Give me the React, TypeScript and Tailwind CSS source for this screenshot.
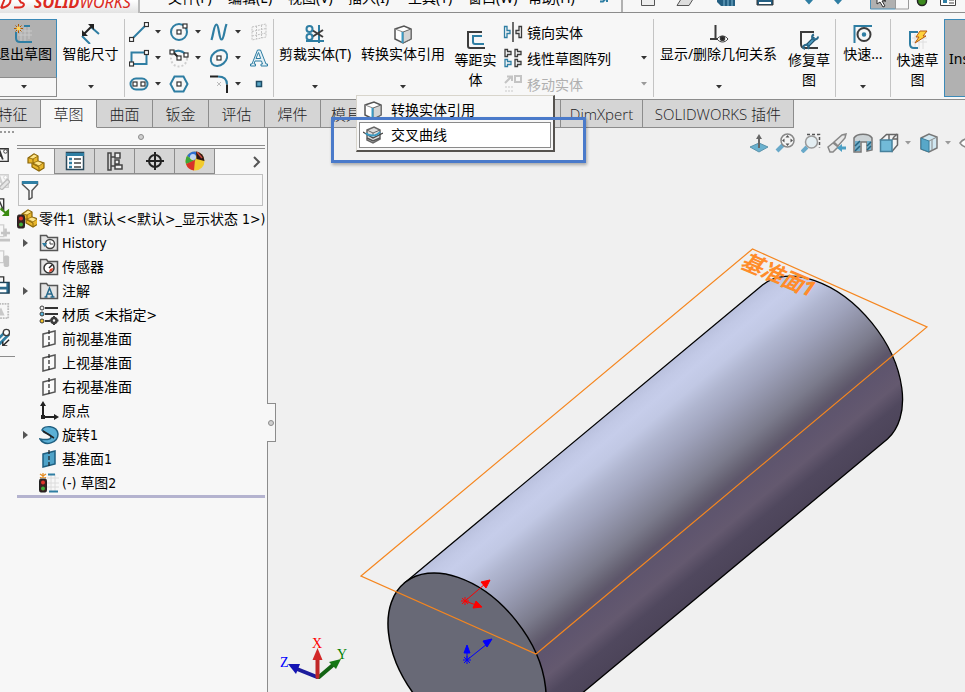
import { ReactNode } from 'react';
import clsx from 'clsx';

const BLUE = '#2f7ea3';
const DARK = '#3c3c3c';

interface IconProps {
  children: ReactNode;
  className?: string;
}

function Icon({ children, className = 'w-5 h-5' }: IconProps) {
  return (
    <svg viewBox="0 0 20 20" fill="none" stroke={DARK} strokeWidth="1.5" className={clsx('shrink-0', className)} aria-hidden="true">
      {children}
    </svg>
  );
}

function Arrow({ dim = false }: { dim?: boolean }) {
  return (
    <svg viewBox="0 0 6 4" className={clsx('w-1.5 h-1 shrink-0', dim ? 'fill-[#9a9a9a]' : 'fill-[#333]')} aria-hidden="true">
      <path d="M0 0h6L3 3.5z" />
    </svg>
  );
}

function Handle({ x, y }: { x: number; y: number }) {
  return <rect x={x - 2} y={y - 2} width="4" height="4" fill="#fff" stroke="#333" strokeWidth="1.2" />;
}

/* ---------- menu bar ---------- */

const menus = ['文件(F)', '编辑(E)', '视图(V)', '插入(I)', '工具(T)', '窗口(W)', '帮助(H)'];

function MenuBar() {
  return (
    <header className="relative z-10 h-[13px] shrink-0 border-b border-[#8c8c8c] bg-[#f7f7f7]">
      <div className="flex h-3 items-end overflow-hidden pl-[168px]">
        <nav className="flex w-[432px] shrink-0 items-end pb-1">
          {menus.map((m) => (
            <button key={m} className="w-[60px] shrink-0 text-left text-[14px] leading-5 text-black">
              {m}
            </button>
          ))}
        </nav>
        <svg viewBox="0 0 365 12" className="h-3 w-[365px] shrink-0" fill="none" aria-hidden="true">
          <path d="M0 1.500h3l2-2M7-1v3" stroke={BLUE} strokeWidth="2" />
          <path d="M22 0v12" stroke="#9a9a9a" strokeWidth="1.500" />
          <path d="M41.500-3v8.500h13V-3z" fill="#eee" stroke="#555" />
          <path d="M83-4l-6 9.500h12l6-9.500z" fill="#ddd" stroke="#555" />
          <path d="M117-2h18v8h-14l-4-4z" fill="#245f82" />
          <path d="M124 0v6M128 0v6M132 0v6" stroke="#7fb9d4" />
          <path d="M157-2h16v7h-16z" fill="#245f82" stroke="#333" />
          <path d="M159 3h12" stroke="#fff" strokeWidth="2" />
          <path d="M205 0h8l-4 4.500zM234 0h8l-4 4.500z" fill={BLUE} />
          <path d="M270.500-2h25v11h-25z" fill="#b0b0b0" stroke="#4a90b8" />
          <path d="M295.500-2h13v11h-13z" fill="#f7f7f7" stroke="#999" />
          <path d="M277-2v6l3-2 3 5 2-1-3-5h4z" fill="#fff" stroke="#333" />
          <circle cx="322" cy="1" r="4.500" fill="#3c8a1e" stroke="#222" strokeWidth="1.500" />
          <path d="M340.500-3h15v8.500h-15z" fill="#fff" stroke="#444" />
          <path d="M343-1h4v4h-4z" fill={BLUE} />
          <path d="M349 0h5M349 3h5" stroke="#444" />
        </svg>
      </div>
      <div className="absolute left-0 top-0 h-[17px] w-[140px] overflow-hidden border-b-2 border-r-2 border-[#b9b9b9] bg-linear-to-b from-white to-[#dedede]">
        <div className="flex h-2.5 items-end text-[#dc2a22]">
          <svg viewBox="0 0 34 10" className="h-2.5 w-[34px] shrink-0" fill="none" stroke="currentColor" strokeWidth="2" aria-hidden="true">
            <path d="M1 8C8 7 12 3 10-3M5-2L1 8M14 7.500h5c5 0 7-4 2-5l-2-3" />
          </svg>
          <span className="text-[16px] italic leading-4">
            <b>SOLID</b>WORKS
          </span>
        </div>
      </div>
    </header>
  );
}

/* ---------- ribbon ---------- */

interface RibbonButtonProps {
  icon: ReactNode;
  label: string;
  arrow?: boolean;
  low?: boolean;
  className?: string;
}

function RibbonButton({ icon, label, arrow = false, low = false, className }: RibbonButtonProps) {
  return (
    <button
      className={clsx(
        'flex h-[86px] shrink-0 flex-col items-center text-[14px] leading-5 text-black',
        low ? 'pt-[17px]' : 'pt-[11px]',
        className,
      )}
    >
      {icon}
      <span className={low ? 'w-11 text-center' : 'whitespace-nowrap'}>{label}</span>
      {arrow && (
        <span className="mt-auto pb-2.5">
          <Arrow />
        </span>
      )}
    </button>
  );
}

function Separator() {
  return <div className="mt-1.5 h-[78px] w-px shrink-0 bg-[#c4c4c4]" />;
}

const sketchTools: { name: string; icon: ReactNode; arrow: boolean }[] = [
  { name: '直线', arrow: true, icon: <><path d="M3 17L17 3" stroke={BLUE} strokeWidth="2" /><Handle x={2.500} y={17.500} /><Handle x={17.500} y={2.500} /></> },
  { name: '圆', arrow: true, icon: <><circle cx="10" cy="10" r="8" stroke={BLUE} strokeWidth="2" /><Handle x={10} y={10} /><Handle x={16} y={4} /></> },
  { name: '样条曲线', arrow: true, icon: <path d="M2.500 18C5 10 5 2.500 7.500 2.500S10 17.500 12.500 17.500 15 9 17.500 2" stroke={BLUE} strokeWidth="2.200" /> },
  { name: '基准面', arrow: false, icon: <path d="M3 5l14-3v13L3 18zM7.500 4v13M12.500 3v13M3 9.500l14-3M3 14l14-3" stroke="#c2c2c2" strokeWidth="1" strokeDasharray="2 1" /> },
  { name: '边角矩形', arrow: true, icon: <><path d="M2.500 4.500h15v11.500h-15z" stroke={BLUE} strokeWidth="2" /><Handle x={2.500} y={16} /><Handle x={17.500} y={4.500} /></> },
  { name: '圆弧', arrow: true, icon: <><circle cx="10" cy="10.500" r="8" stroke="#cfcfcf" strokeWidth="2" strokeDasharray="2 2" /><path d="M4 4.500c4-3 10-2 13 2.500" stroke={BLUE} strokeWidth="2" /><path d="M4 4l6 6" stroke="#222" strokeWidth="2" /><Handle x={3} y={4} /><Handle x={10} y={10} /><Handle x={17} y={7} /></> },
  { name: '椭圆', arrow: true, icon: <><ellipse cx="10" cy="10" rx="9" ry="7" transform="rotate(-40 10 10)" stroke={BLUE} strokeWidth="2" /><Handle x={10} y={10} /></> },
  { name: '文字', arrow: false, icon: <path d="M1.500 18h5v-2H5l1-3h6.500l1 3H12v2h6.500v-2H17L11.500 2h-3L3 16H1.500zM7 10.500L9.500 4.500l2.200 6z" fill="#e4f1f7" stroke={BLUE} strokeWidth="1" /> },
  { name: '槽口', arrow: true, icon: <><rect x="1.500" y="4.500" width="17" height="11" rx="5.500" stroke={BLUE} strokeWidth="2" /><Handle x={6} y={10} /><Handle x={14} y={10} /></> },
  { name: '多边形', arrow: false, icon: <><path d="M5.500 2.500h9l4 7.500-4 7.500h-9l-4-7.500z" stroke={BLUE} strokeWidth="2" /><Handle x={10} y={10} /></> },
  { name: '圆角', arrow: true, icon: <><path d="M1 2.500h8" stroke="#222" strokeWidth="2" /><path d="M9 2.500c6 0 9 3 9 8" stroke={BLUE} strokeWidth="2" /><path d="M18 10.500V19" stroke="#222" strokeWidth="2" /><path d="M8 8l4 4M12 8l-4 4" stroke="#bbb" strokeWidth="1" /></> },
  { name: '点', arrow: false, icon: <rect x="7.500" y="7.500" width="5" height="5" fill="#5aa7c7" stroke="#1f4d66" /> },
];

function CubeDrawing() {
  return (
    <>
      <path d="M2 5l9-3 7 3v10l-8 4-8-4z" fill="#fff" stroke="#555" />
      <path d="M10 8l8-3v10l-8 4z" fill="#d4d4d4" stroke="#666" strokeWidth="1" />
      <path d="M2 5l8 3" stroke="#888" strokeWidth="1" />
      <path d="M9.500 8v11" stroke="#3a9bc4" strokeWidth="2" />
    </>
  );
}

const patternTools = [
  {
    label: '镜向实体',
    arrow: false,
    dim: false,
    icon: (
      <>
        <path d="M10 0v20" stroke="#222" strokeWidth="1.300" />
        <path d="M1.500 4.500v11h2.500v-4h3v-3H4v-4z" stroke={BLUE} strokeWidth="1.300" />
        <path d="M18.500 4.500v11H16v-4h-3v-3h3v-4z" strokeWidth="1.300" />
      </>
    ),
  },
  {
    label: '线性草图阵列',
    arrow: true,
    dim: false,
    icon: (
      <>
        <path d="M2 1.500v7h2.500V6.500H8v-3H4.500v-2zM12 1.500v7h2.500V6.500H18v-3h-3.500v-2zM12 11.500v7h2.500v-2H18v-3h-3.500v-2z" strokeWidth="1.300" />
        <path d="M2 11.500v7h2.500v-2H8v-3H4.500v-2z" stroke={BLUE} strokeWidth="1.300" />
      </>
    ),
  },
  {
    label: '移动实体',
    arrow: true,
    dim: true,
    icon: (
      <g stroke="#c4c4c4">
        <path d="M2 9l6-6M4 2.500h5V7" strokeWidth="2" />
        <path d="M12 2h6v6h-6z" strokeWidth="2" />
        <path d="M2 13h8M2 17h8" strokeDasharray="2 1" strokeWidth="2" stroke="#e0e0e0" />
      </g>
    ),
  },
];

function ConvertMenu() {
  return (
    <div className="absolute left-0 top-[82px] z-20 w-[199px] border border-r-2 border-b-2 border-[#d8d5cc] border-b-[#55524e] border-r-[#55524e] bg-[#f7f7f7] p-0.5 text-[14px] leading-6 text-black">
      <button className="flex h-6 w-full items-center gap-2 pl-1">
        <Icon><CubeDrawing /></Icon>
        转换实体引用
      </button>
      <button className="flex h-[26px] w-full items-center gap-2 border border-[#8a8a8a] bg-white pl-[3px]">
        <Icon className="h-5 w-5">
          <path d="M4 5l7-3 6 3v9l-7 4-6-3z" fill="#ddd" stroke="#666" />
          <path d="M4 5l6 3 7-3M10 8v3" stroke="#666" strokeWidth="1" />
          <path d="M0 7l10 6 10-5" stroke="#444" strokeWidth="1.200" />
          <path d="M3 8c2 3 10 4 14-1" stroke="#3a9bc4" strokeWidth="2" />
          <path d="M4 13l6 3 7-3" stroke="#555" strokeWidth="1.500" />
        </Icon>
        交叉曲线
      </button>
      <div className="pointer-events-none absolute -left-[26px] top-[21px] h-[46px] w-[255px] border-[3px] border-[#4a7aca] shadow-[1px_2px_3px_rgba(0,0,0,0.3)]" />
    </div>
  );
}

function Ribbon() {
  return (
    <section className="relative z-10 flex h-[86px] shrink-0 bg-[#f7f7f7]">
      <div className="-ml-[9px] mt-1.5 flex h-[78px] w-[66px] shrink-0 flex-col text-[14px] leading-5 text-black">
        <button className="flex h-[59px] flex-col items-center border border-[#3c8ab8] border-b-[#8c8c8c] bg-[#b1b1b1] pt-1">
          <Icon>
            <path d="M7 4v13M11 2v15M15 2v13M4 7h14M4 11h14" stroke="#c9c9c9" strokeWidth="1" />
            <path d="M10 2h6M2 8v6c0 3 1 4 4 4h12" stroke={BLUE} strokeWidth="2" />
            <path d="M4.500 0v9M0 4.500h9M1.500 1.500l6 6M7.500 1.500l-6 6" stroke="#b05a00" strokeWidth="1" />
            <circle cx="4.500" cy="4.500" r="2" fill="#ffd35a" stroke="none" />
          </Icon>
          <span className="whitespace-nowrap">退出草图</span>
        </button>
        <button aria-label="退出草图选项" className="flex h-[19px] items-center justify-center border border-t-0 border-[#8c8c8c]">
          <Arrow />
        </button>
      </div>
      <RibbonButton
        className="w-[67px]"
        label="智能尺寸"
        arrow
        icon={
          <Icon>
            <path d="M1 12l8 8M10 3l8 7" stroke={BLUE} strokeWidth="2" />
            <path d="M3 10l8-8" stroke="#222" strokeWidth="2" />
            <path d="M1 12V6l6 6zM13 0v6L7 0z" fill="#222" stroke="none" />
          </Icon>
        }
      />
      <Separator />
      <div className="mt-1.5 grid w-[148px] shrink-0 auto-rows-[26px] grid-cols-[40px_40px_40px_26px] pl-0.5">
        {sketchTools.map((tool) => (
          <div key={tool.name} className="flex items-center">
            <button aria-label={tool.name} className="flex w-6 justify-center">
              <Icon>{tool.icon}</Icon>
            </button>
            {tool.arrow && (
              <button aria-label={`${tool.name}选项`} className="flex w-3.5 justify-center">
                <Arrow />
              </button>
            )}
          </div>
        ))}
      </div>
      <Separator />
      <RibbonButton
        className="w-[82px]"
        label="剪裁实体(T)"
        arrow
        icon={
          <Icon>
            <path d="M14 1v18M1 17h18" stroke={BLUE} strokeWidth="2" />
            <path d="M7 6l11 7M7 13l11-7" strokeWidth="2" />
            <circle cx="4.500" cy="5" r="3" stroke={BLUE} strokeWidth="2" />
            <circle cx="4.500" cy="13" r="3" stroke={BLUE} strokeWidth="2" />
          </Icon>
        }
      />
      <div className="relative w-[94px] shrink-0">
        <RibbonButton className="w-full" label="转换实体引用" arrow icon={<Icon><CubeDrawing /></Icon>} />
        <ConvertMenu />
      </div>
      <RibbonButton
        className="w-[51px]"
        label="等距实体"
        low
        icon={
          <Icon>
            <path d="M16 2H2v14c0 1 1 2 2 2h15" strokeWidth="2" />
            <path d="M16 6H7v6c0 2 1 2 2 2h9" stroke={BLUE} strokeWidth="2" />
          </Icon>
        }
      />
      <div className="mt-1.5 w-[152px] shrink-0 pl-0.5">
        {patternTools.map((tool) => (
          <button
            key={tool.label}
            className={clsx('flex h-[26px] w-full items-center gap-1 text-[14px]', tool.dim ? 'text-[#b0b0b0]' : 'text-black')}
          >
            <Icon>{tool.icon}</Icon>
            {tool.label}
            {tool.arrow && (
              <span className="ml-auto pr-1.5">
                <Arrow dim={tool.dim} />
              </span>
            )}
          </button>
        ))}
      </div>
      <Separator />
      <RibbonButton
        className="w-[129px]"
        label="显示/删除几何关系"
        arrow
        icon={
          <Icon>
            <path d="M6.500 1v14M1 15h9" strokeWidth="2" />
            <path d="M8 15c3-4 8-4 11 0-3 4-8 4-11 0z" fill="#fff" strokeWidth="1" />
            <circle cx="13.500" cy="14.500" r="2" fill="#222" />
          </Icon>
        }
      />
      <RibbonButton
        className="w-[52px]"
        label="修复草图"
        low
        icon={
          <Icon>
            <path d="M15 2H2v12c0 2 1 4 4 4h13" strokeWidth="2" />
            <path d="M8 16l8-8" stroke="#1f4d66" strokeWidth="4" />
            <path d="M8 16l8-8" stroke="#4d9bc0" strokeWidth="2" />
            <path d="M15 4.500c-3 1-2 5 0 5s4 0 4-3M9 19c2-3-1-5-3-4s-3 3 0 4" stroke="#2b6a8c" strokeWidth="2" />
          </Icon>
        }
      />
      <Separator />
      <RibbonButton
        className="w-[54px]"
        label="快速..."
        arrow
        icon={
          <Icon>
            <path d="M1.500 19V2H19" stroke={BLUE} strokeWidth="2" />
            <circle cx="11" cy="10.500" r="6.500" strokeWidth="2" />
            <circle cx="11" cy="10.500" r="1.500" fill={BLUE} stroke={BLUE} />
          </Icon>
        }
      />
      <Separator />
      <RibbonButton
        className="w-[53px]"
        label="快速草图"
        low
        icon={
          <Icon>
            <path d="M7 4v15M11 4v15M15 4v15M4 8h15M4 12h15" stroke="#dedede" strokeWidth="1" />
            <path d="M10 2H2v12c0 3 1 4 4 4h4" stroke={BLUE} strokeWidth="2" />
            <path d="M12 1h7l-4 5h3L7 13l4-6H8z" fill="#ffd23c" stroke="#b85a10" strokeWidth="1" />
          </Icon>
        }
      />
      <button className="mt-1.5 h-[78px] min-w-12 flex-1 border border-[#3c8ab8] bg-[#b1b1b1] pl-1 text-left text-[14px] text-black">
        Instant2D
      </button>
    </section>
  );
}

/* ---------- command tabs ---------- */

const tabs = [
  { label: '特征', width: 'w-14' },
  { label: '草图', width: 'w-14' },
  { label: '曲面', width: 'w-14' },
  { label: '钣金', width: 'w-14' },
  { label: '评估', width: 'w-14' },
  { label: '焊件', width: 'w-14' },
  { label: '模具工具', width: 'w-60' },
  { label: 'DimXpert', width: 'w-[82px]' },
  { label: 'SOLIDWORKS 插件', width: 'w-[151px]' },
];

function CommandTabs() {
  return (
    <nav className="flex h-[29px] shrink-0 border-t border-[#8c8c8c] bg-[#f0f0f0]">
      <div className="-ml-[15px] flex">
        {tabs.map((tab) => (
          <button
            key={tab.label}
            className={clsx(
              "shrink-0 overflow-hidden whitespace-nowrap border-r border-b border-[#8c8c8c] font-['Open_Sans','Noto_Sans_CJK_SC',sans-serif] text-[15px] font-light leading-[26px] text-[#1c1c24]",
              tab.width,
              tab.label === '草图' ? 'border-b-[#f7f7f7] bg-[#f7f7f7]' : 'bg-[#d5d5d5]',
              tab.label === '模具工具' && 'pl-2.5 text-left',
            )}
          >
            {tab.label}
          </button>
        ))}
      </div>
    </nav>
  );
}

/* ---------- left side ---------- */

function NoteDrawing({ color }: { color: string }) {
  return (
    <g stroke={color}>
      <path d="M2 3h16v14H2z" />
      <path d="M3 15l5-11 4 11M4 11h7" strokeWidth="2" />
      <circle cx="15" cy="6" r="2" strokeWidth="1" fill="#fff" />
    </g>
  );
}

const sideTools: { name: string; icon: ReactNode }[] = [
  { name: '注释', icon: <NoteDrawing color="#333" /> },
  { name: '编辑注释', icon: <><NoteDrawing color="#cfcfcf" /><path d="M8 17l9-9 3 3-9 9z" fill="#e6e6e6" stroke="#bdbdbd" /></> },
  { name: '插入注释', icon: <><path d="M4 14V1h9v13M6 12l3-7 3 7" stroke="#333" /><path d="M10 10l5 5 4-3v8h-8l3-3-5-4z" fill="#3a8a10" stroke="none" /></> },
  { name: '添加注释', icon: <><path d="M4 14V1h9v13z" stroke="#cfcfcf" /><path d="M15 5v9M10 10h10M8 18h12" stroke="#c4c4c4" strokeWidth="3" /></> },
  { name: '锁定注释', icon: <><path d="M4 14V1h9v13z" stroke="#cfcfcf" /><rect x="13" y="6" width="6" height="13" rx="2" fill="#c4c4c4" stroke="none" /></> },
  { name: '保存注释', icon: <><path d="M6 10V1h7v9" stroke="#333" /><path d="M5 7h14v12H5z" fill="#2b6a8c" stroke="#1c3f54" /><path d="M8 8h8v4H8zM8 15h8v3H8z" fill="#fff" stroke="none" /></> },
  { name: '图像', icon: <><path d="M2 2h16v16H2z" stroke="#bdbdbd" strokeDasharray="2 1" strokeWidth="2" /><path d="M5 15l5-9 4 9z" fill="#c8c8c8" stroke="none" /></> },
  { name: '测量', icon: <><path d="M4 15l11-11M8 18l11-11" stroke={BLUE} strokeWidth="3" /><circle cx="16" cy="5" r="3.500" fill="#fff" /><path d="M19 13l-6 6M12 15v5h5" stroke="#222" /></> },
];

function SideToolbar() {
  return (
    <aside className="w-[17px] shrink-0 overflow-hidden">
      <div className="mt-[3px] w-3.5 border-t-2 border-dotted border-[#9a9a9a]" />
      <div className="flex w-2.5 flex-col items-end pt-[9px]">
        {sideTools.map((tool) => (
          <button key={tool.name} aria-label={tool.name} className="flex h-[26px] items-center">
            <Icon className="h-[18px] w-[18px]">{tool.icon}</Icon>
          </button>
        ))}
      </div>
      <div className="mt-1.5 w-[15px] border-t border-[#8c8c8c]" />
    </aside>
  );
}

function PartDrawing() {
  return (
    <g stroke="#8a6508" strokeWidth="1.200">
      <path d="M2 6l6-4 4 2v5l6 2v5l-5 3-7-4v-4H2z" fill="#e8b62c" />
      <path d="M8 2l4 2-5 3-4-1zM12 9l5 2-4 3-6-3z" fill="#ffe68a" strokeWidth="0.800" />
      <path d="M7 7v5l6 3v3" fill="none" strokeWidth="1" />
    </g>
  );
}

function TrafficLight() {
  return (
    <>
      <rect x="0.500" y="6" width="7" height="13" rx="1.500" fill="#3a2020" stroke="#222" strokeWidth="1" />
      <circle cx="4" cy="9.500" r="2" fill="#e0352b" stroke="none" />
      <circle cx="4" cy="15.500" r="2" fill="#3fae3a" stroke="none" />
    </>
  );
}

function Folder() {
  return <path d="M1.500 17.500v-15h6l1.500 2h9.500v13z" fill="#e4e4e4" stroke="#555" />;
}

function PlaneDrawing({ fill, stroke }: { fill: string; stroke: string }) {
  return (
    <>
      <path d="M4 5l12-3v13L4 18z" fill={fill} stroke={stroke} />
      <path d="M10 1v18" stroke="#222" strokeWidth="1.200" strokeDasharray="4 2" />
    </>
  );
}

const planeIcon = <PlaneDrawing fill="#fafafa" stroke="#555" />;

const panelTabs: { name: string; icon: ReactNode }[] = [
  { name: '设计树', icon: <PartDrawing /> },
  {
    name: '属性管理器',
    icon: (
      <>
        <path d="M1.500 1.500h17v17h-17z" fill="#fff" stroke="#2b4a5c" />
        <path d="M1 3.500h18" stroke={BLUE} strokeWidth="3" />
        <path d="M4 8h3M4 12h3M4 16h3" stroke={BLUE} strokeWidth="2.500" />
        <path d="M9 8h7M9 12h7M9 16h7" stroke="#444" />
      </>
    ),
  },
  {
    name: '配置管理器',
    icon: (
      <>
        <path d="M3 2h3v17H3zM6 6h4M6 15h4" stroke="#444" />
        <path d="M10 2h5v5h-5zM10 9h4v4h-4zM10 14h7v4h-7z" fill="#eee" stroke="#444" />
      </>
    ),
  },
  {
    name: '尺寸专家',
    icon: (
      <>
        <circle cx="10" cy="10" r="6" stroke="#222" strokeWidth="2" />
        <path d="M10 1v18M1 10h18" stroke="#222" strokeWidth="2" />
      </>
    ),
  },
  {
    name: '外观管理器',
    icon: (
      <g stroke="none">
        <circle cx="10" cy="10" r="9.500" fill="#f2cb2e" />
        <path d="M10 10L2 5A9.500 9.500 0 0 1 12 .700z" fill="#2e6fd0" />
        <path d="M2 5A9.500 9.500 0 0 0 1 13L9 10z" fill="#3ea63a" />
        <path d="M1 13A9.500 9.500 0 0 0 9 19.500L10 9z" fill="#d8322a" />
        <path d="M11 .500A9.500 9.500 0 0 1 19.500 10l-8-2z" fill="#2a1414" />
        <circle cx="8" cy="6" r="3" fill="#fff" opacity="0.700" />
        <path d="M12 1l5 6" stroke="#c94a3c" strokeWidth="1.500" />
      </g>
    ),
  },
];

interface TreeItem {
  label: string;
  icon: ReactNode;
  expandable?: boolean;
}

const treeItems: TreeItem[] = [
  { label: 'History', expandable: true, icon: <><Folder /><circle cx="11" cy="11" r="4.500" fill="#fff" stroke="#444" /><path d="M11 8.500V11h3" stroke="#444" strokeWidth="1" /><path d="M3 10h5l-2.500 4z" fill={BLUE} stroke="none" /></> },
  { label: '传感器', icon: <><Folder /><circle cx="10" cy="11" r="5" fill="#fff" stroke="#333" /><path d="M10 11l3-3" stroke="#222" /><path d="M10 15a4 4 0 0 0 4-4l-3 1z" fill="#e0452b" stroke="none" /></> },
  { label: '注解', expandable: true, icon: <><Folder /><path d="M5.500 16h3M11.500 16h4M7 16l3.500-9L14 16M8.500 13h4" stroke="#25688a" /></> },
  {
    label: '材质 <未指定>',
    icon: (
      <>
        <path d="M6 3h13M6 9h13" stroke="#333" strokeWidth="2" />
        <path d="M6 16h5" stroke="#333" strokeWidth="2" />
        <circle cx="3" cy="3" r="2" fill="#eee" strokeWidth="1" />
        <circle cx="3" cy="9" r="2" fill="#56b5dc" strokeWidth="1" />
        <circle cx="3" cy="16" r="2" fill="#f2c22b" strokeWidth="1" />
        <circle cx="15" cy="15.500" r="2.500" strokeWidth="2.500" />
        <path d="M15 11v2M15 18v2M10.500 15.500h2M17.500 15.500h2" strokeWidth="2" />
      </>
    ),
  },
  { label: '前视基准面', icon: planeIcon },
  { label: '上视基准面', icon: planeIcon },
  { label: '右视基准面', icon: planeIcon },
  { label: '原点', icon: <><path d="M4 3v13h13" stroke="#222" strokeWidth="2" /><path d="M4 0l3 5H1zM20 16l-5 3v-6z" fill="#222" stroke="none" /><rect x="2" y="14" width="4" height="4" fill="#222" stroke="none" /></> },
  { label: '旋转1', expandable: true, icon: <><path d="M3 5C5 0 18 0 19 9c0 9-13 13-18 5 5 1 11 1 11-2 0-4-6-2-9-7z" fill="#5bb0d6" stroke="#1f5f80" /><path d="M4 6l11 7" stroke="#222" /></> },
  { label: '基准面1', icon: <PlaneDrawing fill="#4fa3c8" stroke="#1f5f80" /> },
  {
    label: '(-) 草图2',
    icon: (
      <>
        <path d="M12 1v18M16 1v18M8 5h12M8 10h12M8 14h12" stroke="#dcdcdc" strokeWidth="1" />
        <path d="M9 1.500h7M10 18.500h9" stroke={BLUE} strokeWidth="2" />
        <path d="M1 1l6 4M7 1L1 5M4 0v5" stroke="#e58a1c" strokeWidth="1.200" />
        <TrafficLight />
      </>
    ),
  },
];

function FeatureTree() {
  return (
    <ul className="border-b-[3px] border-[#b4b3cf] font-['DejaVu_Sans_Condensed','Noto_Sans','Noto_Sans_CJK_SC',sans-serif] text-[14px] leading-6 text-black">
      <li className="flex h-6 items-center gap-0.5 whitespace-nowrap">
        <Icon>
          <g transform="translate(3 -1)"><PartDrawing /></g>
          <TrafficLight />
        </Icon>
        <span className="whitespace-pre">零件1  (默认&lt;&lt;默认&gt;_显示状态 1&gt;)</span>
      </li>
      {treeItems.map((item) => (
        <li key={item.label} className="flex h-6 items-center whitespace-nowrap pl-1.5">
          <span className="flex w-4 shrink-0">
            {item.expandable && (
              <svg viewBox="0 0 5 8" className="h-2 w-[5px] fill-[#555]" aria-hidden="true">
                <path d="M0 0l5 4-5 4z" />
              </svg>
            )}
          </span>
          <Icon>{item.icon}</Icon>
          <span className="pl-[3px]">{item.label}</span>
        </li>
      ))}
    </ul>
  );
}

function FeaturePanel() {
  return (
    <div className="relative flex w-[268px] shrink-0 border-r border-[#8c8c8c] bg-[#f7f7f7]">
      <SideToolbar />
      <div className="min-w-0 flex-1 pr-0.5">
        <div className="flex h-[18px] items-center justify-center border-b border-[#8c8c8c]">
          <span className="h-1.5 w-1.5 rounded-full border border-[#8c8c8c] bg-[#d0d0d0]" />
        </div>
        <div className="mt-0.5 flex h-[26px] border-t border-[#8c8c8c]">
          {panelTabs.map((tab, i) => (
            <button
              key={tab.name}
              aria-label={tab.name}
              className={clsx(
                'flex items-center justify-center border-r border-[#8c8c8c]',
                i === 0 ? 'w-[38px]' : 'w-10 border-b bg-[#d5d5d5]',
              )}
            >
              <Icon>{tab.icon}</Icon>
            </button>
          ))}
          <button aria-label="更多" className="ml-auto flex items-center pr-1">
            <svg viewBox="0 0 8 12" className="h-3 w-2" fill="none" stroke="#555" strokeWidth="2" aria-hidden="true">
              <path d="M1 1l5 5-5 5" />
            </svg>
          </button>
        </div>
        <label className="mr-0.5 ml-px flex h-8 items-center border border-[#c0c0c0] pl-0.5">
          <Icon>
            <path d="M1.500 2h15v2.500l-5.500 6v7l-3 2v-9l-6.500-6z" fill="#fafafa" stroke="#555" />
            <path d="M1 2.500h16" stroke={BLUE} strokeWidth="3" />
          </Icon>
          <input type="text" aria-label="过滤器" className="min-w-0 flex-1 bg-transparent px-1 text-[14px] outline-none" />
        </label>
        <div className="pt-px">
          <FeatureTree />
        </div>
      </div>
      <button
        aria-label="折叠面板"
        className="absolute -right-[9px] top-[275px] z-10 flex h-[39px] w-[9px] items-center justify-center border border-l-0 border-[#8c8c8c] bg-[#f7f7f7]"
      >
        <span className="h-1.5 w-1.5 rounded-full border border-[#8c8c8c] bg-[#d0d0d0]" />
      </button>
    </div>
  );
}

/* ---------- graphics area ---------- */

const viewTools: { name: string; icon: ReactNode; arrow?: boolean }[] = [
  { name: '正视于', icon: <><path d="M1 14l9-4 9 4-9 5z" fill="#69b1cf" stroke="#5c93ab" strokeWidth="1" /><path d="M10 15V5" stroke="#666" strokeWidth="2" /><path d="M10 1l3 5H7z" fill="#666" stroke="none" /></> },
  { name: '整屏显示', icon: <><path d="M2 18l6-6" stroke="#69a9c9" strokeWidth="4" /><circle cx="12.500" cy="7.500" r="6.500" fill="#f4f4f4" stroke="#888" /><path d="M12.500 2l2 2.500h-4zM12.500 13l2-2.500h-4zM7 7.500l2.500-2v4zM18 7.500l-2.500-2v4z" fill="#555" stroke="none" /></> },
  { name: '局部放大', icon: <><path d="M6 1.500h12.500v13" stroke="#555" strokeDasharray="3 2" /><path d="M1 19l5-5" stroke="#69a9c9" strokeWidth="4" /><circle cx="10.500" cy="9" r="6" fill="#e4eef2" stroke="#999" /></> },
  { name: '上一视图', icon: <><path d="M1 14l5-4 5 4-5 5H3zM7 9l8-7 4-1-1 4-7 8z" fill="#e8e8e8" stroke="#888" /><path d="M10 15l5-4v2.500h4v3h-4V19z" fill="#4b9fc4" stroke="none" /></> },
  { name: '剖面视图', icon: <><path d="M1 5c3-5 15-5 18 0v12l-5 1V9H8v10H1z" fill="#ccd3d6" stroke="#777" /><path d="M2 8h5v10H2zM14 8h4v9h-4z" fill="#72afca" stroke="none" /><path d="M2 13l5-5M2 18l5-5M14 13l4-4M14 17l4-4" stroke="#28647f" /></> },
  { name: '视图定向', arrow: true, icon: <><path d="M1.500 7l6-5.500h11V12L13 18.500z" fill="#f4f4f4" stroke="#666" /><path d="M10 2v5M18 6h-5M14 5l4-4" stroke="#666" /><path d="M1.500 7H13v11.500H1.500z" fill="#72bad8" stroke="#47819c" /></> },
  { name: '显示样式', arrow: true, icon: <><path d="M2 5l8-4 8 3v11l-8 4-8-3z" fill="#d0e7f1" stroke="#777" /><path d="M2 5l8 3v11l-8-3z" fill="#58a7c8" stroke="#3a7d9a" strokeWidth="1" /><path d="M10 8l8-4M13 7v11" stroke="#888" strokeWidth="1" /></> },
  { name: '隐藏项目', icon: <><path d="M1 10c4-6 14-6 18 0-4 6-14 6-18 0z" fill="#fff" stroke="#888" /><circle cx="10" cy="10" r="3" fill="#666" /></> },
];

function ViewToolbar() {
  return (
    <div className="absolute left-[481px] top-[5px] flex items-center">
      {viewTools.map((tool) => (
        <div key={tool.name} className="flex shrink-0 items-center">
          <button aria-label={tool.name} className="flex w-[26px] items-center pr-1.5">
            <Icon>{tool.icon}</Icon>
          </button>
          {tool.arrow && (
            <button aria-label={`${tool.name}选项`} className="flex w-3.5 justify-start">
              <Arrow dim />
            </button>
          )}
        </div>
      ))}
    </div>
  );
}

function Asterisk({ x, y, color }: { x: number; y: number; color: string }) {
  return <path d={`M${x - 4} ${y}h8M${x} ${y - 4}v8M${x - 3} ${y - 3}l6 6M${x + 3} ${y - 3}l-6 6`} stroke={color} />;
}

function Model() {
  return (
    <svg viewBox="268 128 697 564" preserveAspectRatio="xMinYMin slice" className="absolute inset-0 h-full w-full" fill="none" role="img">
      <defs>
        <linearGradient id="body" gradientUnits="userSpaceOnUse" x1="404.5" y1="582.9" x2="531.4" y2="735.4">
          <stop offset="0" stopColor="#bac1de" />
          <stop offset="0.050" stopColor="#c2c9e6" />
          <stop offset="0.100" stopColor="#c6cdea" />
          <stop offset="0.170" stopColor="#c1c8e4" />
          <stop offset="0.250" stopColor="#b0b6d0" />
          <stop offset="0.350" stopColor="#a0a4bd" />
          <stop offset="0.450" stopColor="#8e90a5" />
          <stop offset="0.550" stopColor="#7b7b8c" />
          <stop offset="0.630" stopColor="#666273" />
          <stop offset="0.670" stopColor="#5d566a" />
          <stop offset="0.730" stopColor="#5f556e" />
          <stop offset="0.820" stopColor="#64596f" />
          <stop offset="0.900" stopColor="#50485e" />
          <stop offset="1" stopColor="#4c4459" />
        </linearGradient>
      </defs>

      {/* cylinder */}
      <path
        d="M404.500 582.900L762.500 284.900A99.300 62.900 51.500 0 1 887.500 439.100L529.500 737z"
        fill="url(#body)"
        stroke="#000"
        strokeWidth="1.300"
      />
      <ellipse cx="467" cy="660" rx="99.300" ry="62.900" transform="rotate(51.500 467 660)" fill="#686976" stroke="#000" strokeWidth="1.500" />

      {/* reference plane */}
      <path d="M361 576L752.500 249 927 327 536 654z" stroke="#f5861f" strokeWidth="1.200" />
      <text x="739" y="267" transform="rotate(23 739 267)" className="fill-[#ff8c2a] text-[22px] font-bold italic">
        基准面1
      </text>

      {/* sketch origins */}
      <g stroke="#f00">
        <Asterisk x={465} y={601} color="#f00" />
        <path d="M465 601l20-17M465 601l11 4" />
        <path d="M490 580l-4 8-5-6zM482 607l-9 1 3-7z" fill="#f00" />
      </g>
      <g stroke="#00f">
        <Asterisk x={467} y={660} color="#00f" />
        <path d="M467 660v-10M467 660l20-16" />
        <path d="M467 645l3 8h-6zM492 639l-5 8-4-6z" fill="#00f" />
      </g>

      {/* triad */}
      <g strokeLinecap="round">
        <path d="M317 677l-20-8" stroke="#1c1c9c" strokeWidth="4" />
        <path d="M288 664l12 0-4 10z" fill="#1414b4" />
        <path d="M319 677l14-12" stroke="#146414" strokeWidth="4" />
        <path d="M341 659l-5 10-7-7z" fill="#147814" />
        <path d="M317.500 677v-20" stroke="#c02828" strokeWidth="4" />
        <path d="M317.500 648l5 12h-10z" fill="#d22828" />
      </g>
      <g className="font-['Liberation_Serif',serif] text-[14px]">
        <text x="312" y="648" fill="#f00">X</text>
        <text x="337" y="659" fill="#008000">Y</text>
        <text x="280" y="667" fill="#00f">Z</text>
      </g>
    </svg>
  );
}

export default function App() {
  return (
    <div className="flex h-screen flex-col overflow-hidden bg-[#f0f0f0] font-['Noto_Sans','Noto_Sans_CJK_SC',sans-serif]">
      <MenuBar />
      <Ribbon />
      <CommandTabs />
      <div className="flex min-h-0 flex-1">
        <FeaturePanel />
        <main className="relative min-w-0 flex-1 overflow-hidden">
          <Model />
          <ViewToolbar />
        </main>
      </div>
    </div>
  );
}
